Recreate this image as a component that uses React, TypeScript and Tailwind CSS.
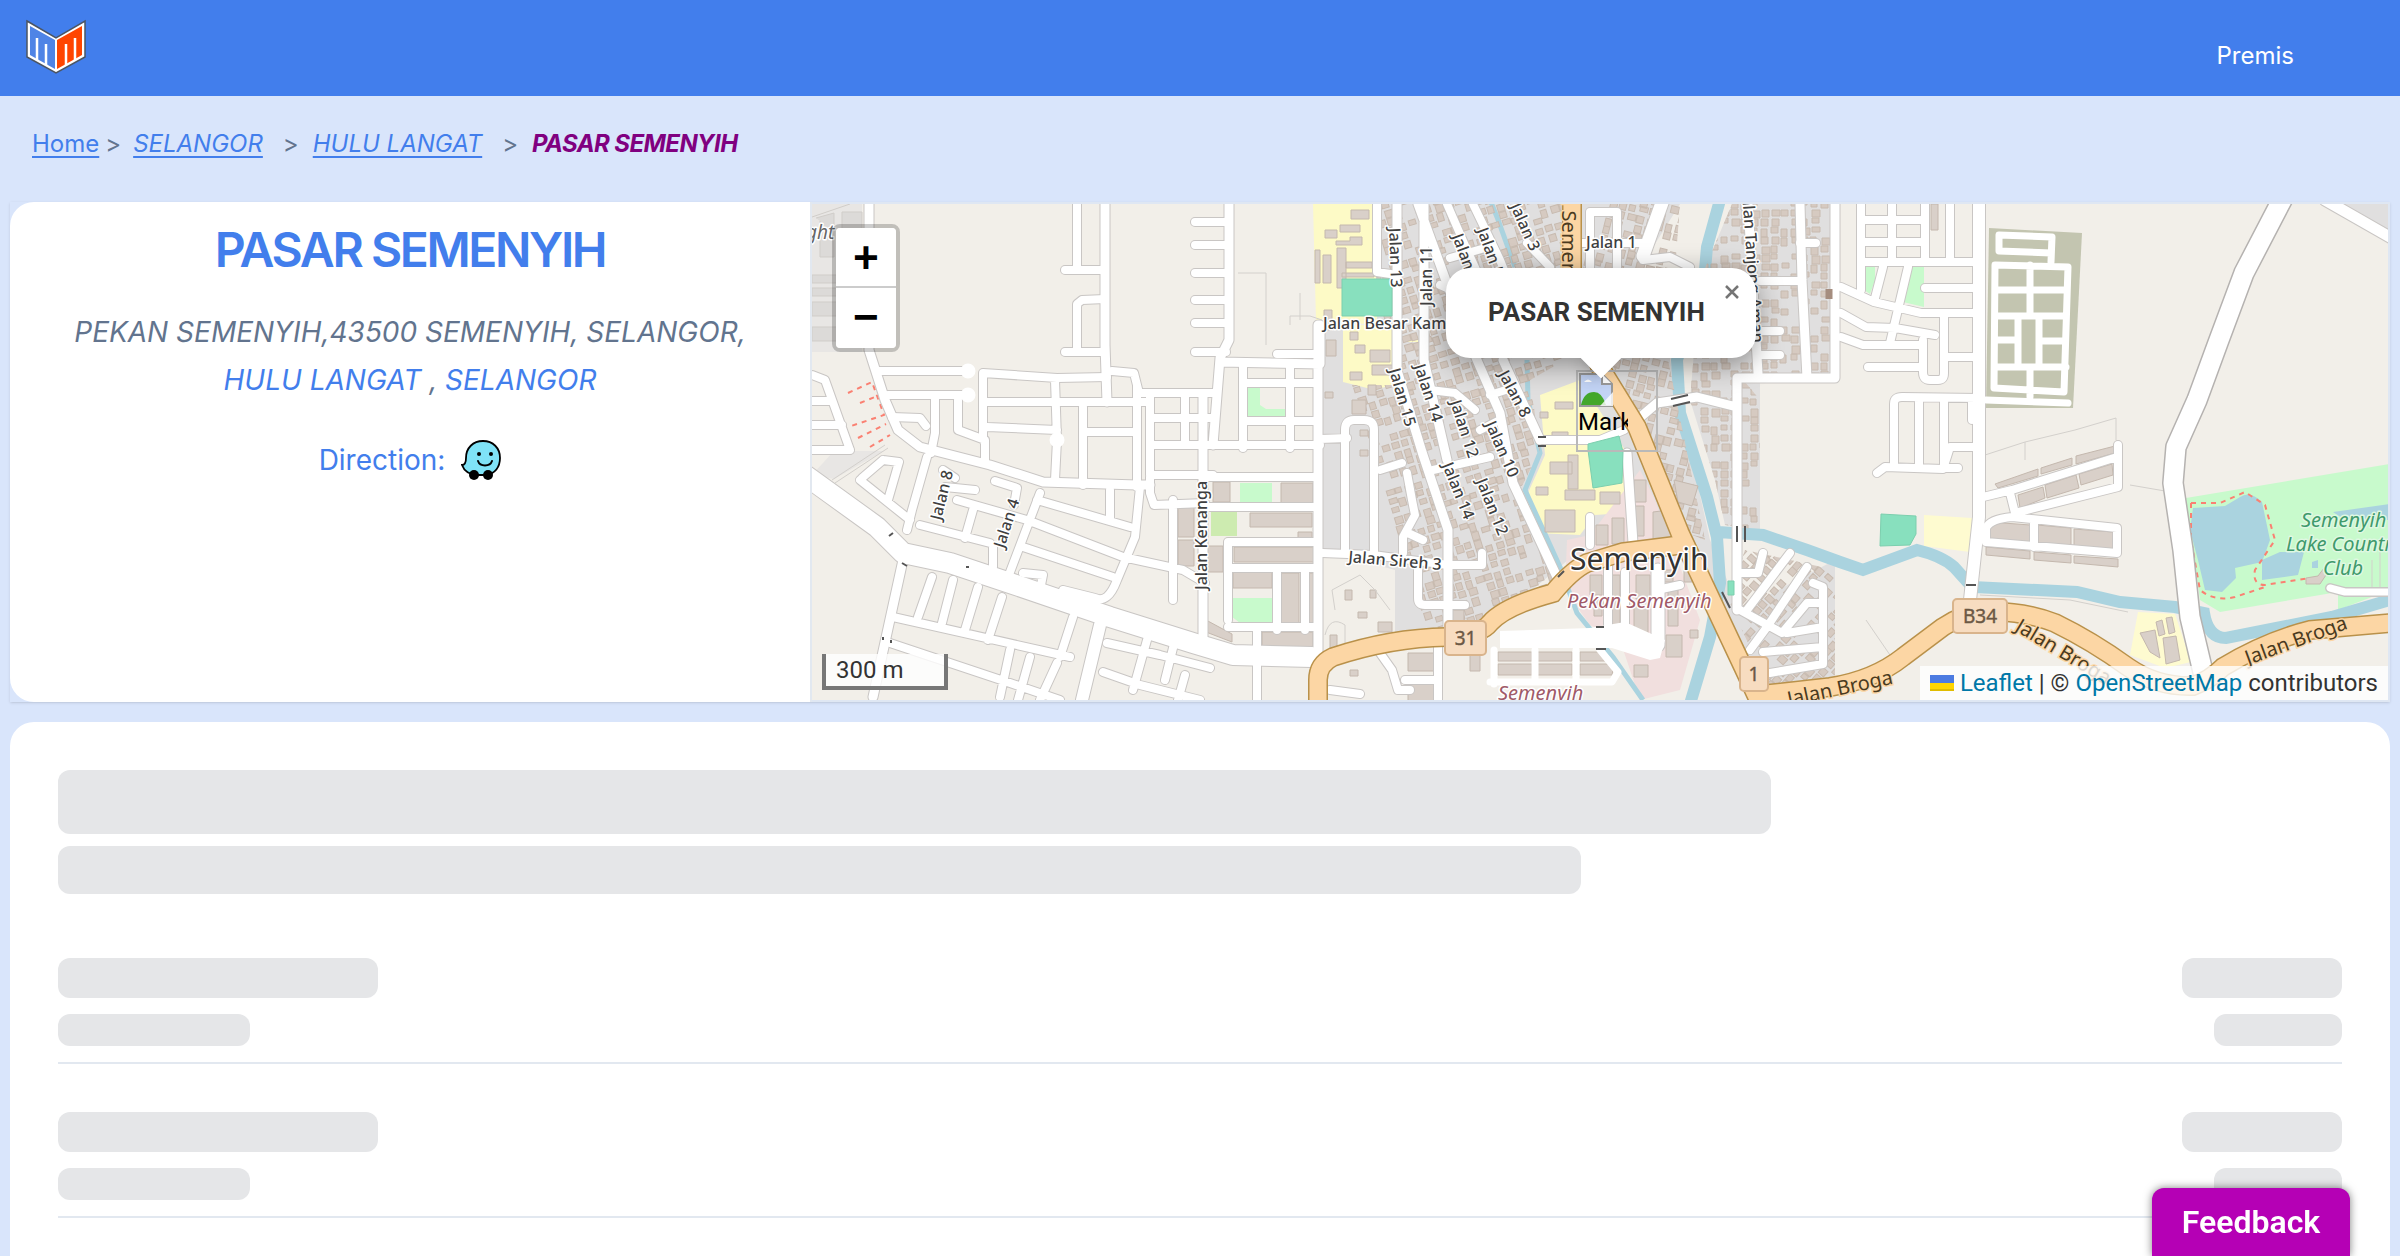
type Label = { t: string; x: number; y: number; r?: number; s?: number };

const crumbs = ["SELANGOR", "HULU LANGAT"];
const skeletonRows = [0, 1, 2];

// thin residential streets
const lanes = [
  "M877 371H966M888 395H968M935 397V433L931 453M958 400V430L985 440V460M892 417L920 418L926 426",
  "M983 440V373L1057 378L1107 377M1077 204V268M1065 270H1105M1105 299L1082 300L1077 304V350M1065 352H1105",
  "M1112 371L1134 373L1139 393H1213M1055 380L1057 440L1055 480M987 402H1148M987 427L1057 430M1083 407V485M1083 432H1137M1137 385V487",
  "M1150 395V475H1213M1185 393V445M1150 418H1213M1150 445H1320M1195 222H1229M1195 245H1229M1195 273H1229M1195 300H1229M1195 323H1229M1195 352H1226",
  "M1277 354H1318M1243 365V448M1290 365V448M1243 383H1318M1243 421H1318",
  "M1205 477H1318M1205 507H1318M1228 542H1318M1228 568H1318M1228 542V620M1277 568V630M1305 570V630M1228 627H1318M1257 628V700M1173 500V600M1150 477V493L1154 505L1205 503",
  "M812 375L825 380L850 450M812 401H830M812 425H842M812 450L850 450",
  "M860 480L910 520M883 460L862 478M883 460L899 462L888 500M927 457L912 510L907 530M943 470L955 478M920 525L990 543M957 500L1027 520L1123 557L1183 570L1205 583",
  "M1040 493L1007 580M1037 500L1130 527M1023 547L1113 577M1140 487L1135 537L1117 580Q1108 604 1095 598L1063 590M1110 490V518M973 510L965 538M993 547V567M1023 573L1043 575L1040 590M945 487L975 490M995 481L1017 488L1014 505",
  "M932 577L918 617M953 580L942 623M978 587L965 630M1002 597L988 640M893 617L1070 657M890 643L950 663L1010 683L1060 700M1010 650L1000 697M1030 657L1018 700M1057 663L1040 700M1073 617L1060 657",
  "M1147 640L1133 690M1107 643L1160 655L1210 668M1103 672L1140 685L1200 700M1175 640L1165 680M1185 675L1178 700",
  "M1345 450V550M1374 555V430Q1374 420 1364 420H1354Q1345 420 1345 430V450M1320 439L1347 438M1407 473L1412 500L1415 515L1403 537V553M1418 570V598Q1418 605 1425 605H1465M1433 470L1490 457M1423 540L1410 534",
  "M1322 553L1373 555L1448 565H1482V553M1438 647V700M1380 653L1392 670L1398 690H1410M1330 690L1360 694M1405 680H1438M1380 470L1402 463",
  "M1447 204L1467 250L1490 300M1473 204L1500 260L1512 290M1450 258L1485 248M1527 243L1550 267M1377 204V272L1397 275M1430 390L1455 393L1475 410M1475 300L1440 285",
  "M1590 268V212H1617V268M1580 243H1645M1643 260L1670 257L1690 267M1490 395L1515 387M1480 430L1500 420M1540 440L1600 440L1624 430",
  "M1758 331H1780M1758 355H1780M1760 281H1800M1800 243H1816M1763 553L1758 573H1740M1790 553L1747 610M1807 567L1767 627L1750 650",
  "M1813 583L1823 587V664L1770 673M1823 647L1763 652M1823 603H1807L1782 633L1740 610M1787 633L1823 627M1590 517V545M1608 560V625M1625 572V637M1657 590L1680 585",
  "M1861 204V262M1892 204V262M1925 204V262M1950 204V262M1861 220H1920M1861 242H1920M1861 262H1978M1925 288H1978M1908 267L1890 343M1883 267L1875 298M1861 262V290",
  "M1841 287L1874 302L1921 313H1978M1841 313L1866 327L1895 328L1935 335M1841 337L1863 345H1921M1944 313V357H1978M1923 340V372Q1923 380 1930 380H1938Q1944 380 1944 373V357M1868 367H1921",
  "M1979 398L1902 397Q1894 397 1894 404V466M1919 400V465M1944 400V465M1877 473L1885 467L1943 469L1950 447H1979M1972 400V420",
  "M1983 497L2012 490L2117 457M2118 445V487L2015 513L2010 493M1986 542V528Q1990 519 2012 517L2117 528V553L1986 542M2034 520V547M1958 468L1943 468",
];

const cemeteryLanes =
  "M1999 235L2052 237L2051 262M1999 235V251L2051 253M1995 265L2068 267L2064 392L1994 388ZM2030 265V316M2030 367V397M1995 290H2066M1995 316H2066M2018 316V367M2039 316V367M1995 340H2018M2041 341H2065M1995 367H2066M1986 400L2068 403";

const streets = [
  "M869 204V350L885 400L898 430L920 447L990 465L1043 482L1137 485H1150",
  "M1105 204V345L1107 402",
  "M1229 204V340L1220 358L1213 445M1220 362L1320 364V325",
  "M1318 325V655M1203 395V650",
  "M903 560L873 697",
  "M1397 204V370L1422 452L1448 530V635",
  "M1424 204V360L1447 460M1418 204L1453 300L1477 360L1500 413L1513 483L1557 577",
  "M1503 360L1540 440",
  "M1637 420L1657 403L1697 397L1737 407M1737 610V378H1835V204M1748 204L1758 373M1800 204L1802 280L1807 378",
  "M1627 453L1633 543",
];

const highways = [
  "M1318 704V680Q1318 664 1333 657Q1390 638 1447 637Q1480 636 1490 623Q1505 606 1553 593Q1572 570 1587 563L1623 552L1680 545",
  "M1572 200V280L1600 367L1637 427L1680 533L1743 667L1757 697",
  "M1757 695L1830 687Q1874 680 1903 657L1943 627Q1964 613 1985 612Q2020 610 2055 623Q2092 641 2128 667Q2157 687 2193 686Q2210 680 2223 667Q2266 641 2310 630L2390 623",
];

const river =
  "M1720 200L1707 247L1705 270L1677 360L1680 413L1707 497L1717 537L1720 583L1710 637L1690 704M1718 532L1763 535L1807 550L1840 562L1863 570Q1890 560 1917 550Q1942 556 1954 567L1972 587L2077 592L2120 602L2175 607L2204 613Q2208 638 2226 638L2332 617L2390 600";
const stream =
  "M1490 200L1497 217L1515 267M1527 360L1528 400L1540 453L1525 490L1560 567L1577 613L1613 657L1643 700";

const zones = [
  { id: "z1", a: -17, d: "M1375 204H1572V280L1600 340L1530 380L1540 450L1520 490L1560 580L1490 625L1395 640V570L1322 550V385H1392V325H1377Z", x: 1180, y: 560, w: 560, h: 560 },
  { id: "z2", a: 14, d: "M1580 204H1680L1668 360L1705 540L1680 530L1640 430L1585 300Z", x: 1600, y: -260, w: 420, h: 460 },
  { id: "z3", a: 0, d: "M1732 204H1835V372L1740 376L1760 400V530L1725 525L1715 480L1690 400L1700 280Z", x: 1680, y: 200, w: 160, h: 340 },
  { id: "z4", a: 42, d: "M1745 550L1835 570V675L1770 690L1728 600Z", x: 1640, y: -860, w: 240, h: 260 },
];

// stable noise so the house plots keep their place between renders
function noise(i: number, j: number) {
  const v = Math.sin(i * 127.1 + j * 311.7) * 43758.5453;
  return v - Math.floor(v);
}

function Houses({ x, y, w, h }: { x: number; y: number; w: number; h: number }) {
  let d = "";
  for (let i = 0; i * 10 < w; i++) {
    for (let j = 0; j * 9 < h; j++) {
      const n = noise(i, j);
      if (n < 0.24) continue;
      const px = Math.round(x + i * 10 + n * 2);
      const py = Math.round(y + j * 9 + noise(j, i) * 2);
      d += `M${px} ${py}h${Math.round(5 + n * 3)}v${Math.round(5 + noise(j, i) * 3)}h-${Math.round(5 + n * 3)}z`;
    }
  }
  return <path d={d} fill="#d6cac1" stroke="#c8bbb0" />;
}

const buildings =
  "M1178 507h16v30h-16zM1178 540h16v26h-16zM1213 482h17v20h-17zM1281 483h32v20h-32zM1250 513h62v14h-62zM1298 532h14v8h-14zM1207 546h16v26h-16zM1234 547h80v15h-80zM1233 572h39v16h-39zM1281 573h18v50h-18zM1308 573h6v50h-6zM1262 632h51v17h-51zM1206 632L1232 642V634L1206 620z" +
  "M1325 230h12v8h-12zM1340 225h20v7h-20zM1351 210h18v9h-18zM1337 248h9v40h-9zM1323 255h8v28h-8zM1346 262h26v6h-26zM1336 245h26v-8h-12v4h-14zM1342 273h32v4h-32zM1324 310h8v20h-8zM1315 250h5v33h-5z" +
  "M1355 345h10v8h-10zM1370 350h20v12h-20zM1372 365h22v10h-22zM1350 372h12v8h-12zM1326 340h10v16h-10zM1350 332h8v8h-8zM1325 392h8v6h-8zM1352 400h14v14h-14zM1368 385h8v10h-8zM1360 430h8v6h-8zM1360 450h8v6h-8z" +
  "M1545 510h30v22h-30zM1550 462h22v12h-22zM1565 490h30v10h-30zM1536 487h12v8h-12zM1600 492h20v12h-20zM1568 455h10v34h-10zM1555 402h18v7h-18zM1552 432h16v8h-16zM1540 412h8v6h-8z" +
  "M1596 525h12v20h-12zM1612 518h12v26h-12zM1634 480h12v22h-12zM1653 512l16 -2l8 28l-24 4zM1674 480l24 6l-6 20l-14 -4zM1634 506h10v30h-10z" +
  "M1612 575h8v50h-8zM1636 575h14v24h-14zM1634 602h14v34h-14zM1668 590h10v36h-10zM1666 635h16v22h-16zM1590 575h12v20h-12zM1634 665h14v12h-14zM1655 570h18v12h-18zM1690 630h8v8h-8zM1594 600h8v16h-8zM1650 540h12v10h-12zM1684 570h8v12h-8z" +
  "M1498 652h34v9h-34zM1498 664h34v11h-34zM1537 652h35v9h-35zM1537 664h35v11h-35zM1580 652h20l8 9h-28zM1580 664h34l-2 11h-32z" +
  "M1408 653h26v18h-26zM1408 683h26v18h-26zM1450 610h14v14h-14zM1470 655h10v16h-10zM1378 622h14v10h-14zM1345 590h7v10h-7zM1370 590h6v8h-6zM1358 612h9v6h-9zM1330 635h7v14h-7zM1350 670h8v6h-8z" +
  "M1995 484L2038 469V476L1998 488zM2041 468L2072 458V465L2041 474zM2076 456L2115 446V453L2076 464zM2018 495L2043 487L2045 498L2020 508zM2045 485L2076 475L2079 488L2047 498zM2079 474L2112 464L2113 475L2081 485z" +
  "M1990 522L2030 525V542L1990 539zM2037 525L2071 528V547L2037 544zM2074 529L2113 532V551L2074 547zM1986 547L2030 551V559L1986 555zM2034 552L2071 555V563L2034 560zM2074 556L2118 559V567L2074 563z" +
  "M2140 633L2155 630L2160 658L2150 652zM2156 622L2162 620L2165 634L2159 636zM2166 618L2172 617L2175 632L2169 634zM2163 638L2176 636L2180 660L2166 664zM2306 578l12 -2l6 -8l4 4l-8 12h-14zM1931 204h7v26h-7z";

const labels: Label[] = [
  { t: "Jalan 8", x: 941, y: 521, r: -76, s: 16 },
  { t: "Jalan 4", x: 1004, y: 549, r: -72, s: 16 },
  { t: "Jalan Kenanga", x: 1207, y: 590, r: -90, s: 16 },
  { t: "Jalan 13", x: 1389, y: 228, r: 88, s: 16 },
  { t: "Jalan 11", x: 1432, y: 306, r: -90, s: 16 },
  { t: "Jalan 2", x: 1452, y: 236, r: 70, s: 16 },
  { t: "Jalan 5", x: 1477, y: 230, r: 70, s: 16 },
  { t: "Jalan 3", x: 1510, y: 206, r: 66, s: 16 },
  { t: "Jalan 15", x: 1389, y: 370, r: 74, s: 16 },
  { t: "Jalan 14", x: 1414, y: 366, r: 72, s: 16 },
  { t: "Jalan 12", x: 1450, y: 402, r: 72, s: 16 },
  { t: "Jalan 10", x: 1485, y: 424, r: 66, s: 16 },
  { t: "Jalan 8", x: 1498, y: 374, r: 62, s: 16 },
  { t: "Jalan 14", x: 1442, y: 465, r: 68, s: 16 },
  { t: "Jalan 12", x: 1476, y: 481, r: 68, s: 16 },
  { t: "Jalan Sireh 3", x: 1348, y: 562, r: 5, s: 16 },
  { t: "Jalan Besar Kam", x: 1323, y: 329, s: 16 },
  { t: "Jalan 1", x: 1586, y: 248, s: 16 },
  { t: "Jalan Tanjong Aman", x: 1742, y: 192, r: 86, s: 16 },
];

const roadNames: Label[] = [
  { t: "Jalan Semenyih", x: 1562, y: 160, r: 90 },
  { t: "Jalan Broga", x: 1789, y: 706, r: -12 },
  { t: "Jalan Broga", x: 2014, y: 630, r: 31 },
  { t: "Jalan Broga", x: 2248, y: 665, r: -20 },
];

function Shield({ x, y, w, t }: { x: number; y: number; w: number; t: string }) {
  return (
    <g>
      <rect x={x} y={y} width={w} height="34" rx="4" fill="#f7dcc0" stroke="#d9b48c" strokeWidth="2" />
      <text x={x + w / 2} y={y + 24} textAnchor="middle" fontSize="19" fill="#6b5844" stroke="#6b5844" strokeWidth="0.4">
        {t}
      </text>
    </g>
  );
}

function StreetMap() {
  return (
    <svg
      className="absolute inset-0 size-full font-['Noto_Sans',sans-serif]"
      viewBox="812 204 1576 496"
      preserveAspectRatio="xMidYMid slice"
      aria-hidden="true"
    >
      <rect x="812" y="204" width="1576" height="496" fill="#f2efe9" />
      <path d="M812 204h50v148h-50zM812 475l22 -24h50l-50 28z" fill="#e8e6e4" />
      <path
        d="M812 217L850 204M816 218l18 -5v44h-14v-36M842 212h20v46h-20zM812 275h28v8h-28zM812 288h28v8h-28zM812 302h28v14h-28zM812 327h28v14h-28z"
        fill="#dcdad8"
        stroke="#d0cdc9"
      />

      {/* land use */}
      <path d="M1375 204H1680L1640 268L1690 268L1670 360L1710 540L1740 610L1835 560V690H1760L1680 540L1580 550L1490 625L1395 640V570L1322 550V325H1377Z" fill="#e0dfdf" />
      <path d="M1732 204H1835V376H1760V530L1725 525L1715 480L1690 400L1700 280Z" fill="#e0dfdf" />
      <path d="M1313 204H1374L1377 325L1316 320ZM1343 325H1392V385L1375 390L1343 382ZM1404 336H1418V342H1404ZM1540 395L1580 380L1625 450V513L1595 515L1580 535L1535 533L1527 495L1545 455Z" fill="#fdfac6" />
      <path d="M1567 540L1590 535L1640 470L1655 500L1700 620L1680 690L1640 700L1620 640L1590 625L1565 590Z" fill="#f1dfde" />
      <path d="M1924 515L1972 518L1970 552L1924 546ZM2138 612L2175 614L2191 662L2165 668L2130 655Z" fill="#fefbd0" />
      <path
        d="M1248 388H1260V405L1266 409H1286V418H1248ZM1240 483H1272V503H1240ZM1232 598H1272V623H1240L1231 616ZM1864 266H1875L1875 280L1870 294L1864 290ZM1910 267H1924V307L1903 302ZM2186 498L2390 464V590L2338 610V592L2220 612L2200 600Z"
        fill="#c8facc"
      />
      <path d="M1211 512H1237V536H1211Z" fill="#cdebb0" />
      <path d="M1989 228L2082 233L2073 408L1986 408Z" fill="#c3c5b0" />
      <path d="M2340 204H2390V240Z" fill="#e0dfdf" />

      {/* water */}
      <path
        d="M2193 508L2225 506L2240 497Q2250 490 2262 502L2270 540L2262 562L2235 568L2236 578L2222 592L2205 590L2198 560L2190 530ZM2262 560L2280 552L2304 552L2298 575L2262 580ZM2333 512L2390 504V520H2345ZM2312 562l6 -2v8h-6z"
        fill="#aad3df"
      />
      <path d={river} fill="none" stroke="#aad3df" strokeWidth="12" />
      <path d={stream} fill="none" stroke="#aad3df" strokeWidth="5" />

      {zones.map((z) => (
        <g key={z.id} clipPath={`url(#${z.id})`}>
          <clipPath id={z.id}>
            <path d={z.d} />
          </clipPath>
          <g transform={`rotate(${z.a})`}>
            <Houses x={z.x} y={z.y} w={z.w} h={z.h} />
          </g>
        </g>
      ))}
      <path d={buildings} fill="#d9d0c9" stroke="#c4b8ae" />

      {/* footpaths */}
      <g fill="none" stroke="#d3d0cc" strokeWidth="1">
        <path d="M1238 273H1266V345M1300 293V320M1290 325V316H1310L1322 320M832 480L885 445M835 483L888 448" />
        <path d="M1335 610L1332 590L1360 575L1375 590L1390 610M1325 635Q1330 615 1345 625V645M1985 455L2025 442L2075 430L2116 418V440M2025 442V460M1866 620L1890 655M2130 485L2165 491M1103 630L1082 695" />
        <path d="M1980 595L2070 600L2128 612M2380 550V590M2372 560V588" />
      </g>
      <g fill="none" stroke="#fa8072" strokeWidth="2" strokeDasharray="5 5">
        <path d="M848 393L872 382L884 415L848 427M860 403L880 395M858 438L886 424M870 447L890 435M1315 553H1335" />
        <path d="M2191 503H2220L2245 492L2265 505L2275 540L2255 570Q2252 585 2265 585L2310 578M2191 503V540L2200 590Q2215 602 2235 597L2265 587" />
      </g>

      {/* roads, casing first */}
      <g fill="none" strokeLinecap="round" strokeLinejoin="round">
        <g stroke="#c9c6c4">
          <path d={lanes.join("")} strokeWidth="10" />
          <path d={streets.join("")} strokeWidth="11" />
          <path d="M1658 570V645M1663 200L1643 256" strokeWidth="15" />
          <path d="M1100 625L1082 700M1979 200V517L1970 600" strokeWidth="14" />
          <path d="M805 475L877 527L903 553L950 563L1010 583L1110 617L1193 643L1233 655L1312 657" strokeWidth="22" />
          <path d="M2283 198L2244 273L2219 340L2197 400L2176 447L2173 483L2183 550L2190 617L2203 672" strokeWidth="22" stroke="#b5b2b0" />
          <path d="M2325 200L2395 240" strokeWidth="13" />
          <path d="M2330 588L2345 592H2390" strokeWidth="10" />
        </g>
        <g stroke="#fff">
          <path d={lanes.join("")} strokeWidth="8" />
          <path d={streets.join("")} strokeWidth="9" />
          <path d={cemeteryLanes} strokeWidth="7" />
          <path d="M968 371h0M968 395h0M1057 440h0" strokeWidth="15" />
          <path d="M1658 570V645M1663 200L1643 256" strokeWidth="13" />
          <path d="M1100 625L1082 700M1979 200V517L1970 600" strokeWidth="12" />
          <path d="M805 475L877 527L903 553L950 563L1010 583L1110 617L1193 643L1233 655L1312 657" strokeWidth="20" />
          <path d="M2283 198L2244 273L2219 340L2197 400L2176 447L2173 483L2183 550L2190 617L2203 672" strokeWidth="19" />
          <path d="M2325 200L2395 240" strokeWidth="11" />
          <path d="M2330 588L2345 592H2390M1490 682H1612L1618 672L1600 650M1494 650V684M1535 650V680M1576 650V680" strokeWidth="7" />
        </g>
      </g>
      <path d="M1500 631L1590 628L1625 622L1665 640L1660 658L1650 660L1612 648L1500 648Z" fill="#fff" />

      {/* sports pitches */}
      <path
        d="M1342 279H1392V316H1342ZM1588 444L1619 436L1623 452L1622 483L1593 488L1588 450ZM1728 581h6v14h-6zM1881 514L1916 516L1916 534L1910 545L1880 546Z"
        fill="#88e0be"
        stroke="#7ccfae"
      />

      {highways.map((d) => (
        <g key={d} fill="none" strokeLinecap="round">
          <path d={d} stroke="#b9914a" strokeWidth="20" />
        </g>
      ))}
      {highways.map((d) => (
        <path key={d} d={d} fill="none" stroke="#fcd6a4" strokeWidth="17" strokeLinecap="round" />
      ))}

      {/* bridges */}
      <path
        d="M1671 399L1688 395M1673 406L1690 402M1737 526V542M1745 526V542M1596 627H1604M1596 649H1606M1538 437H1546M1538 446H1546M1558 577L1564 571M1966 585H1976M1722 592L1730 608M889 536L893 533M902 563L907 566M883 637v3M891 640v3M966 567h3"
        stroke="#555"
        strokeWidth="2"
      />
      <path d="M1829 289v10" stroke="#a58d7f" strokeWidth="7" />

      <g fill="#3f3f3f" stroke="#fff" strokeWidth="3" strokeLinejoin="round" style={{ paintOrder: "stroke" }}>
        {labels.map((l, i) => (
          <text key={i} x={l.x} y={l.y} fontSize={l.s} fontWeight="500" transform={`rotate(${l.r ?? 0} ${l.x} ${l.y})`}>
            {l.t}
          </text>
        ))}
        <text x="806" y="239" fontSize="19" fontStyle="italic" fill="#666">
          ght
        </text>
        <text x="1570" y="570" fontSize="30" fill="#333">
          Semenyih
        </text>
        <g fontStyle="italic" fill="#a05a68" fontSize="20">
          <text x="1567" y="608">Pekan Semenyih</text>
          <text x="1498" y="700">Semenyih</text>
        </g>
        <g fontStyle="italic" fill="#3f9a6c" stroke="#dff8e2" fontSize="20">
          <text x="2301" y="527">Semenyih</text>
          <text x="2286" y="551">Lake Country</text>
          <text x="2323" y="575">Club</text>
        </g>
      </g>
      <g fill="#4a3a20" fontSize="20" stroke="#fcd6a4" strokeWidth="3" style={{ paintOrder: "stroke" }}>
        {roadNames.map((l, i) => (
          <text key={i} x={l.x} y={l.y} transform={`rotate(${l.r} ${l.x} ${l.y})`}>
            {l.t}
          </text>
        ))}
      </g>
      <Shield x={1445} y={621} w={41} t="31" />
      <Shield x={1740} y={657} w={28} t="1" />
      <Shield x={1953} y={599} w={54} t="B34" />
    </svg>
  );
}

function Logo() {
  return (
    <svg className="h-14 w-16" viewBox="0 0 64 56" aria-hidden="true">
      <path d="M3 3L32 20L61 3V39L32 55L3 39Z" fill="#fff" stroke="#4b5563" strokeWidth="1.5" />
      <path d="M6 8L31 22V51L6 37Z" fill="#4f84e6" />
      <path d="M33 22L58 8V37L33 51Z" fill="#ff4500" />
      <path d="M13 42V20M22 47V26M42 47V26M51 42V20" stroke="#fff" strokeWidth="2.5" />
    </svg>
  );
}

function Waze() {
  return (
    <svg className="size-10" viewBox="0 0 40 40" aria-hidden="true">
      <path
        d="M22 1C12 1 5 8 5 18C5 23 4 25 1 25C3 31 9 35 16 35H25C34 34 39 27 39 18C39 8 32 1 22 1Z"
        fill="#7fe3f7"
        stroke="#000"
        strokeWidth="1.8"
      />
      <circle cx="18" cy="14" r="2" />
      <circle cx="30" cy="14" r="2" />
      <path d="M17 21C19 27 29 27 31 21" fill="none" stroke="#000" strokeWidth="2" strokeLinecap="round" />
      <circle cx="13" cy="35" r="5" />
      <circle cx="27" cy="35" r="5" />
    </svg>
  );
}

function BrokenImage() {
  return (
    <svg className="size-9" viewBox="0 0 36 36" aria-hidden="true">
      <path d="M2 2H24L34 12V34H2Z" fill="#c3d4f5" stroke="#9a9a9a" strokeWidth="2" />
      <path d="M24 2V12H34" fill="#fff" stroke="#9a9a9a" strokeWidth="2" />
      <path d="M6 10Q10 5 14 10Z" fill="#fff" />
      <path d="M3 33Q6 20 16 20Q24 20 28 33Z" fill="#43a72b" />
      <path d="M22 34L35 20V34Z" fill="#fff" opacity="0.8" />
    </svg>
  );
}

function MapPanel() {
  return (
    <section aria-label="Map" className="relative overflow-hidden border-y-2 border-r-2 border-[#dfe7f3] font-[Roboto,sans-serif] text-2xl text-[#333]">
      <StreetMap />

      <div className="absolute left-5 top-5 flex flex-col overflow-hidden rounded-lg border-4 border-black/20 bg-clip-padding font-['Liberation_Mono',monospace] text-[44px] font-bold leading-none text-black">
        <button aria-label="Zoom in" className="flex size-15 items-center justify-center border-b-2 border-[#ccc] bg-white pt-2">
          +
        </button>
        <button aria-label="Zoom out" className="flex size-15 items-center justify-center bg-white pt-1">
          −
        </button>
      </div>

      <div className="absolute left-[764px] top-[166px] h-[82px] w-[82px] border-2 border-[#b9b9b9]">
        <div className="w-[50px] overflow-hidden leading-7 text-black">
          <BrokenImage />
          Mark
        </div>
      </div>

      <div className="absolute left-[634px] top-16 w-[310px]">
        <div className="absolute left-1/2 top-[74px] size-[30px] -translate-x-1/2 rotate-45 bg-white shadow-lg" />
        <div className="relative h-[90px] rounded-3xl bg-white shadow-[0_6px_28px_rgba(0,0,0,0.4)]">
          <p className="pl-[42px] pt-7 text-[26px] font-bold leading-8">PASAR SEMENYIH</p>
        </div>
        <div className="absolute left-1/2 top-[74px] size-[30px] -translate-x-1/2 rotate-45 bg-white" />
        <button aria-label="Close popup" className="absolute right-2 top-2 flex size-8 items-center justify-center">
          <svg className="size-4" viewBox="0 0 16 16" aria-hidden="true">
            <path d="M2 2L14 14M14 2L2 14" stroke="#757575" strokeWidth="2.5" />
          </svg>
        </button>
      </div>

      <div className="absolute bottom-2.5 left-2.5 w-[126px] border-4 border-t-0 border-[#777] bg-white/80 px-2.5 leading-8">300 m</div>

      <div className="absolute bottom-0 right-0 flex items-center bg-white/80 px-2.5 leading-[34px]">
        <svg className="mr-1.5 h-4 w-6" viewBox="0 0 24 16" aria-hidden="true">
          <path d="M0 0h24v8H0z" fill="#4c7be1" />
          <path d="M0 8h24v8H0z" fill="#ffd500" />
          <path d="M0 14h24v2H0z" fill="#e0bc00" />
        </svg>
        <a href="#leaflet" className="text-[#0078a8]">
          Leaflet
        </a>
        <span className="whitespace-pre"> | © </span>
        <a href="#osm" className="text-[#0078a8]">
          OpenStreetMap
        </a>
        <span className="whitespace-pre"> contributors</span>
      </div>
    </section>
  );
}

function SkeletonRow() {
  return (
    <div className="flex justify-between border-b-2 border-slate-200 pb-4 pt-12">
      <div className="flex flex-col gap-4">
        <div className="h-10 w-80 rounded-xl bg-[#e5e6e8]" />
        <div className="h-8 w-48 rounded-xl bg-[#e5e6e8]" />
      </div>
      <div className="flex flex-col items-end gap-4">
        <div className="h-10 w-40 rounded-xl bg-[#e5e6e8]" />
        <div className="h-8 w-32 rounded-xl bg-[#e5e6e8]" />
      </div>
    </div>
  );
}

export default function App() {
  return (
    <div className="h-screen overflow-hidden bg-[#d9e5fb] font-[Inter,sans-serif] text-2xl text-slate-500">
      <header className="flex h-24 items-start justify-between bg-[#427eec] pl-6 pr-[106px]">
        <a href="#home" aria-label="Home" className="mt-[18px]">
          <Logo />
        </a>
        <nav className="mt-10 leading-8">
          <a href="#premis" className="text-white">
            Premis
          </a>
        </nav>
      </header>

      <nav aria-label="Breadcrumb" className="flex h-[106px] items-start px-8 pt-8 leading-8">
        <a href="#home" className="text-[#427eec] underline decoration-2 underline-offset-4">
          Home
        </a>
        {crumbs.map((c, i) => (
          <span key={c} className="flex">
            <span className={i === 0 ? "ml-1.5 mr-3" : "ml-5 mr-3.5"}>&gt;</span>
            <a href="#area" className="italic text-[#427eec] underline decoration-2 underline-offset-4">
              {c}
            </a>
          </span>
        ))}
        <span className="ml-5 mr-3.5">&gt;</span>
        <span className="font-bold italic tracking-tight text-[#800080]">PASAR SEMENYIH</span>
      </nav>

      <main className="flex flex-col gap-5 px-2.5">
        <div className="grid h-[500px] grid-cols-[802px_1fr] shadow-sm">
          <section className="rounded-l-3xl border-r-2 border-slate-200 bg-white pt-5 text-center">
            <h1 className="text-5xl font-semibold leading-14 tracking-tighter text-[#427eec]">PASAR SEMENYIH</h1>
            <p className="mt-7.5 text-[28px] italic leading-12">
              PEKAN SEMENYIH,43500 SEMENYIH, SELANGOR,
              <br />
              <a href="#hulu-langat" className="text-[#427eec]">
                HULU LANGAT
              </a>{" "}
              ,{" "}
              <a href="#selangor" className="text-[#427eec]">
                SELANGOR
              </a>
            </p>
            <div className="mt-8 flex items-center justify-center gap-4 text-[28px] leading-12 text-[#427eec]">
              <span>Direction:</span>
              <a href="#waze" aria-label="Waze">
                <Waze />
              </a>
            </div>
          </section>
          <MapPanel />
        </div>

        <section aria-label="Loading" className="rounded-3xl bg-white p-12">
          <div className="h-16 w-3/4 rounded-xl bg-[#e5e6e8]" />
          <div className="mt-3 h-12 w-2/3 rounded-xl bg-[#e5e6e8]" />
          <div className="pt-4">
            {skeletonRows.map((r) => (
              <SkeletonRow key={r} />
            ))}
          </div>
        </section>
      </main>

      <button className="fixed bottom-0 right-[50px] h-17 w-[198px] rounded-t-xl bg-[#b500b5] font-[Roboto,sans-serif] text-[32px] font-semibold text-white shadow-[0_0_8px_rgba(0,0,0,0.5)]">
        Feedback
      </button>
    </div>
  );
}
